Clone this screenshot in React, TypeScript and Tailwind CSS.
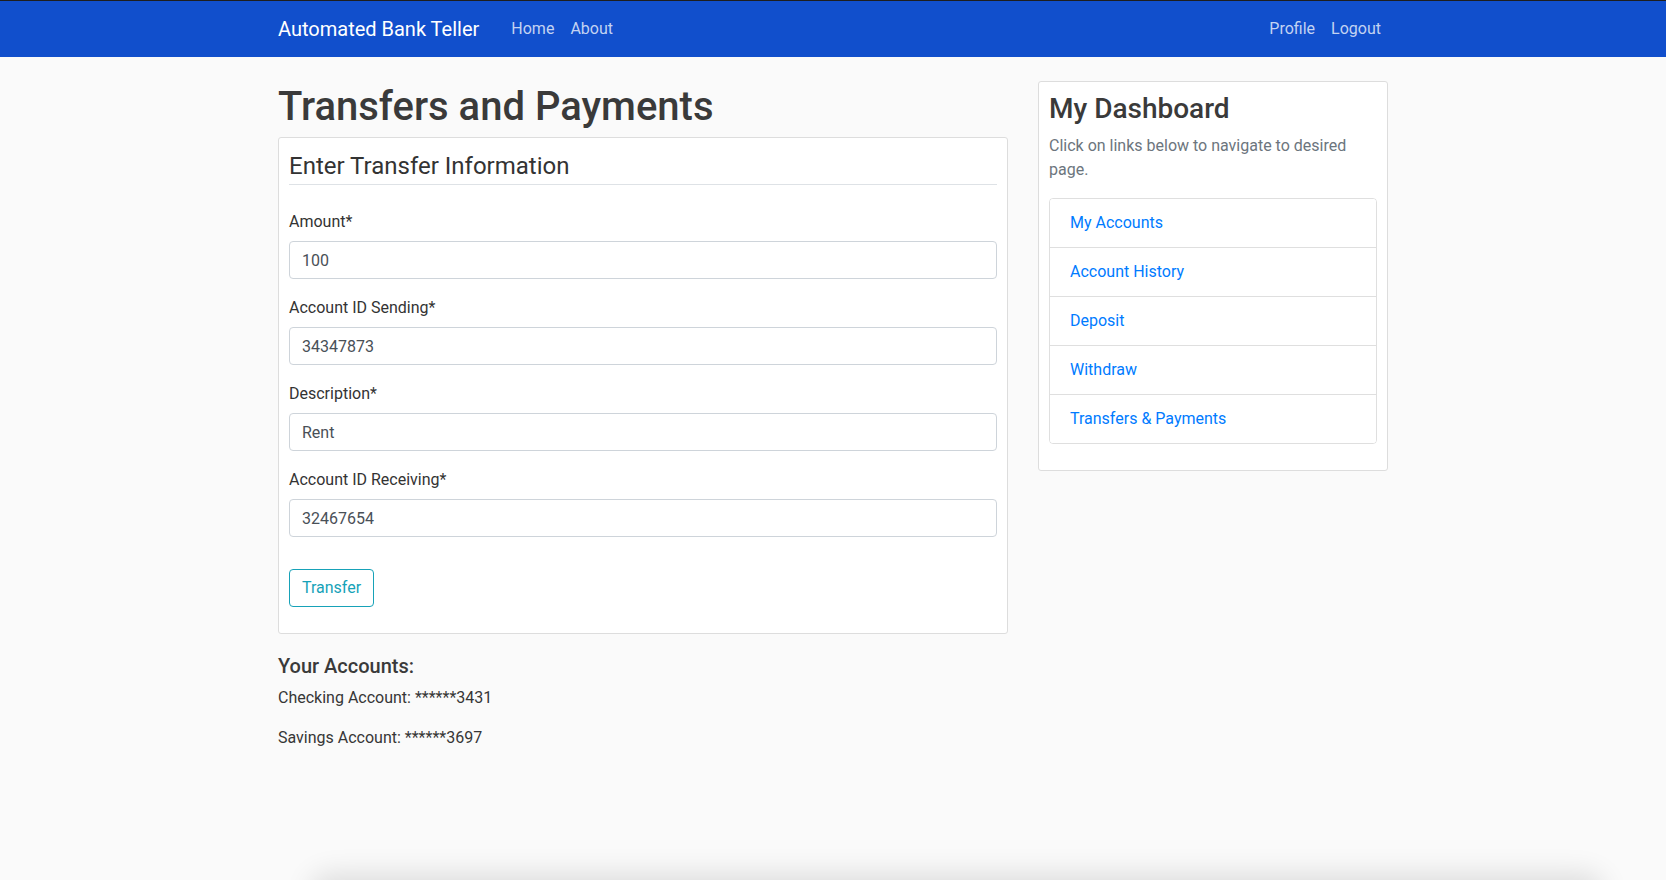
const FIELDS = [
  { label: 'Amount*', value: '100' },
  { label: 'Account ID Sending*', value: '34347873' },
  { label: 'Description*', value: 'Rent' },
  { label: 'Account ID Receiving*', value: '32467654' },
]

const LINKS = ['My Accounts', 'Account History', 'Deposit', 'Withdraw', 'Transfers & Payments']

function Navbar() {
  return (
    <header className="border-t-[1.5px] border-[#1e1e1e] bg-[#114fcc]">
      <nav className="mx-auto flex h-[56px] w-[1110px] items-center">
        <a className="mr-6 text-[20px] leading-[30px] text-white">Automated Bank Teller</a>
        <div className="flex flex-1 items-center">
          <a className="px-2 text-[16px] text-[#c3d3f2]">Home</a>
          <a className="px-2 text-[16px] text-[#c3d3f2]">About</a>
        </div>
        <div className="flex items-center">
          <a className="px-2 text-[16px] text-[#c3d3f2]">Profile</a>
          <a className="pl-2 pr-[7px] text-[16px] text-[#c3d3f2]">Logout</a>
        </div>
      </nav>
    </header>
  )
}

function TransferForm() {
  return (
    <div className="mb-5 rounded-[3px] border border-[#dddddd] bg-white p-[10px]">
      <form>
        <fieldset className="mb-4">
          <legend className="mb-6 w-full border-b border-[#dee2e6] pt-[1px] text-[24px] leading-[35px] text-[#333]">
            Enter Transfer Information
          </legend>
          {FIELDS.map((f) => (
            <div key={f.label} className="mb-4">
              <label className="mb-2 block pt-[1px] text-[16px] leading-[23px] text-[#333]">{f.label}</label>
              <input
                readOnly
                value={f.value}
                className="block h-[38px] w-full rounded-[4px] border border-[#ced4da] bg-white px-3 text-[16px] text-[#495057] outline-none"
              />
            </div>
          ))}
        </fieldset>
        <div className="mb-4">
          <button
            type="button"
            className="h-[38px] rounded-[4px] border border-[#17a2b8] px-3 text-[16px] text-[#17a2b8]"
          >
            Transfer
          </button>
        </div>
      </form>
    </div>
  )
}

function Dashboard() {
  return (
    <div className="rounded-[3px] border border-[#dddddd] bg-white p-[10px]">
      <h3 className="mb-2 text-[28px] font-medium leading-[1.2] text-[#3a3a3a]">My Dashboard</h3>
      <p className="mb-4 text-[16px] leading-6 text-[#6c757d]">Click on links below to navigate to desired page.</p>
      <ul className="mb-4 overflow-hidden rounded-[4px] border border-[rgba(0,0,0,0.125)]">
        {LINKS.map((l, i) => (
          <li
            key={l}
            className={
              i === 0
                ? 'bg-white px-5 py-3 text-[16px] leading-6'
                : 'border-t border-[rgba(0,0,0,0.125)] bg-white px-5 py-3 text-[16px] leading-6'
            }
          >
            <a className="text-[#007bff]">{l}</a>
          </li>
        ))}
      </ul>
    </div>
  )
}

export default function App() {
  return (
    <div className="relative min-h-[880px] overflow-hidden bg-[#fafafa] font-['Roboto','Noto_Sans',sans-serif] text-[#363636]">
      <Navbar />
      <main className="mx-auto mt-6 flex w-[1110px] gap-[30px]">
        <div className="w-[730px]">
          <h1 className="mb-[6px] pt-[2px] text-[40px] font-medium leading-[48px] text-[#3a3a3a]">
            Transfers and Payments
          </h1>
          <TransferForm />
          <h5 className="mb-2 text-[20px] font-medium leading-[1.2] text-[#3a3a3a]">Your Accounts:</h5>
          <p className="mb-4 text-[16px] leading-6">Checking Account: ******3431</p>
          <p className="mb-4 text-[16px] leading-6">Savings Account: ******3697</p>
        </div>
        <div className="w-[350px]">
          <Dashboard />
        </div>
      </main>
      {/* window shadow at the bottom edge of the screenshot */}
      <div className="pointer-events-none absolute left-[310px] right-[62px] top-[880px] h-[40px] rounded-[20px] shadow-[0_-6px_28px_rgba(0,0,0,0.12)]" />
    </div>
  )
}
